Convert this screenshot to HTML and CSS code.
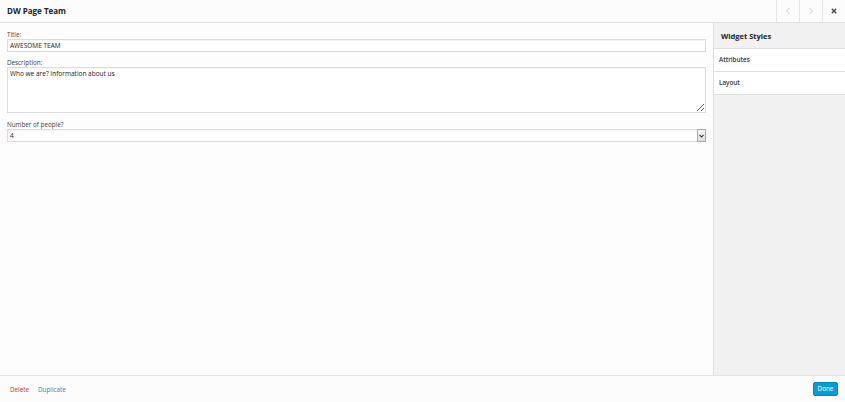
FILE: index.html
```html
<!DOCTYPE html>
<html>
<head>
<meta charset="utf-8">
<link rel="stylesheet" href="styles.css">
</head>
<body>
<div class="dialog">
  <header class="topbar">
    <h1 class="title">DW Page Team</h1>
    <div class="navs">
      <span class="nav nav-prev"><svg width="6" height="8" viewBox="0 0 6 8"><path d="M4.5 1 L1.5 4 L4.5 7" fill="none" stroke="#ccc" stroke-width="1"/></svg></span>
      <span class="nav nav-next"><svg width="6" height="8" viewBox="0 0 6 8"><path d="M1.5 1 L4.5 4 L1.5 7" fill="none" stroke="#ccc" stroke-width="1"/></svg></span>
      <span class="nav nav-close"><svg width="6" height="6" viewBox="0 0 6 6"><path d="M0.8 0.8 L5.2 5.2 M5.2 0.8 L0.8 5.2" fill="none" stroke="#444" stroke-width="1.3"/></svg></span>
    </div>
  </header>
  <div class="body">
    <main class="form">
      <label class="lbl">Title:</label>
      <input class="field" type="text" value="AWESOME TEAM">
      <label class="lbl">Description:</label>
      <textarea class="area">Who we are? Information about us</textarea>
      <label class="lbl">Number of people?</label>
      <div class="selwrap">
        <select class="sel"><option>4</option></select>
        <span class="arrow"><svg width="5" height="4" viewBox="0 0 5 4"><path d="M0.5 0.8 L2.5 3 L4.5 0.8" fill="none" stroke="#333" stroke-width="1.1"/></svg></span>
      </div>
    </main>
    <aside class="side">
      <div class="side-head">Widget Styles</div>
      <div class="side-row">Attributes</div>
      <div class="side-row">Layout</div>
    </aside>
  </div>
  <footer class="foot">
    <div class="links">
      <a class="del">Delete</a>
      <a class="dup">Duplicate</a>
    </div>
    <button class="done">Done</button>
  </footer>
</div>
</body>
</html>
```
FILE: styles.css
```css
* { box-sizing: border-box; }
html, body { margin: 0; padding: 0; }
body {
  font-family: "Open Sans", "Noto Sans", sans-serif;
  font-size: 7px;
  color: #333;
  background: #fdfdfd;
  width: 845px;
  height: 402px;
  overflow: hidden;
}
.dialog {
  display: flex;
  flex-direction: column;
  height: 402px;
}
.topbar {
  height: 23px;
  flex: none;
  display: flex;
  align-items: stretch;
  justify-content: space-between;
  background: #fcfcfc;
  border-bottom: 1px solid #e2e2e2;
}
.title {
  margin: 0;
  padding-left: 7px;
  font-size: 8px;
  font-weight: 700;
  color: #222;
  line-height: 22px;
}
.navs { display: flex; }
.nav {
  width: 23px;
  display: flex;
  align-items: center;
  justify-content: center;
  border-left: 1px solid #e6e6e6;
}
.body {
  flex: 1;
  display: flex;
  min-height: 0;
}
.form {
  flex: 1;
  padding: 8px 7px 0 7px;
  display: flex;
  flex-direction: column;
  background: #fdfdfd;
}
.lbl {
  display: block;
  font-size: 6.3px;
  color: #444;
  line-height: 8px;
}
.field, .area, .sel {
  font-family: "Open Sans", "Noto Sans", sans-serif;
  font-size: 6.5px;
  color: #222;
  border: 1px solid #dcdcdc;
  background: #fff;
  margin: 0;
  box-shadow: inset 0 1px 1px rgba(0,0,0,0.04);
  outline: none;
}
.field {
  width: 699px;
  height: 13px;
  padding: 0 2px;
  margin-bottom: 7px;
}
.area {
  width: 699px;
  height: 46px;
  padding: 1px 2px;
  margin-bottom: 8px;
  resize: vertical;
  line-height: 9px;
}
.selwrap {
  position: relative;
  width: 699px;
  height: 13px;
}
.sel {
  appearance: none;
  -webkit-appearance: none;
  width: 699px;
  height: 13px;
  padding: 0 2px;
  line-height: 11px;
  border-radius: 0;
}
.arrow {
  position: absolute;
  right: 0;
  top: 0;
  width: 9px;
  height: 13px;
  border: 1px solid #aaa;
  background: linear-gradient(#f6f6f6, #dedede);
  display: flex;
  align-items: center;
  justify-content: center;
}
.side {
  width: 132px;
  flex: none;
  background: #f1f1f1;
  border-left: 1px solid #dddddd;
}
.side-head {
  height: 26px;
  line-height: 26px;
  padding-left: 7px;
  font-size: 7.5px;
  font-weight: 700;
  color: #222;
  border-bottom: 1px solid #e0e0e0;
}
.side-row {
  height: 23px;
  line-height: 22px;
  padding-left: 5px;
  font-size: 6.3px;
  font-weight: 600;
  color: #333;
  background: #fff;
  border-bottom: 1px solid #e0e0e0;
}
.foot {
  height: 27px;
  flex: none;
  display: flex;
  align-items: center;
  justify-content: space-between;
  padding: 0 7px 0 10px;
  background: #fcfcfc;
  border-top: 1px solid #e4e4e4;
}
.links { display: flex; gap: 9px; }
.del { color: #c9302c; font-size: 6.3px; }
.dup { color: #2a86c0; font-size: 6.3px; }
.done {
  font-family: "Open Sans", "Noto Sans", sans-serif;
  font-size: 6.3px;
  color: #fff;
  background: #0b9bd4;
  border: 1px solid #0585bb;
  border-radius: 2px;
  width: 25px;
  height: 14px;
  padding: 0;
  line-height: 12px;
}
```
